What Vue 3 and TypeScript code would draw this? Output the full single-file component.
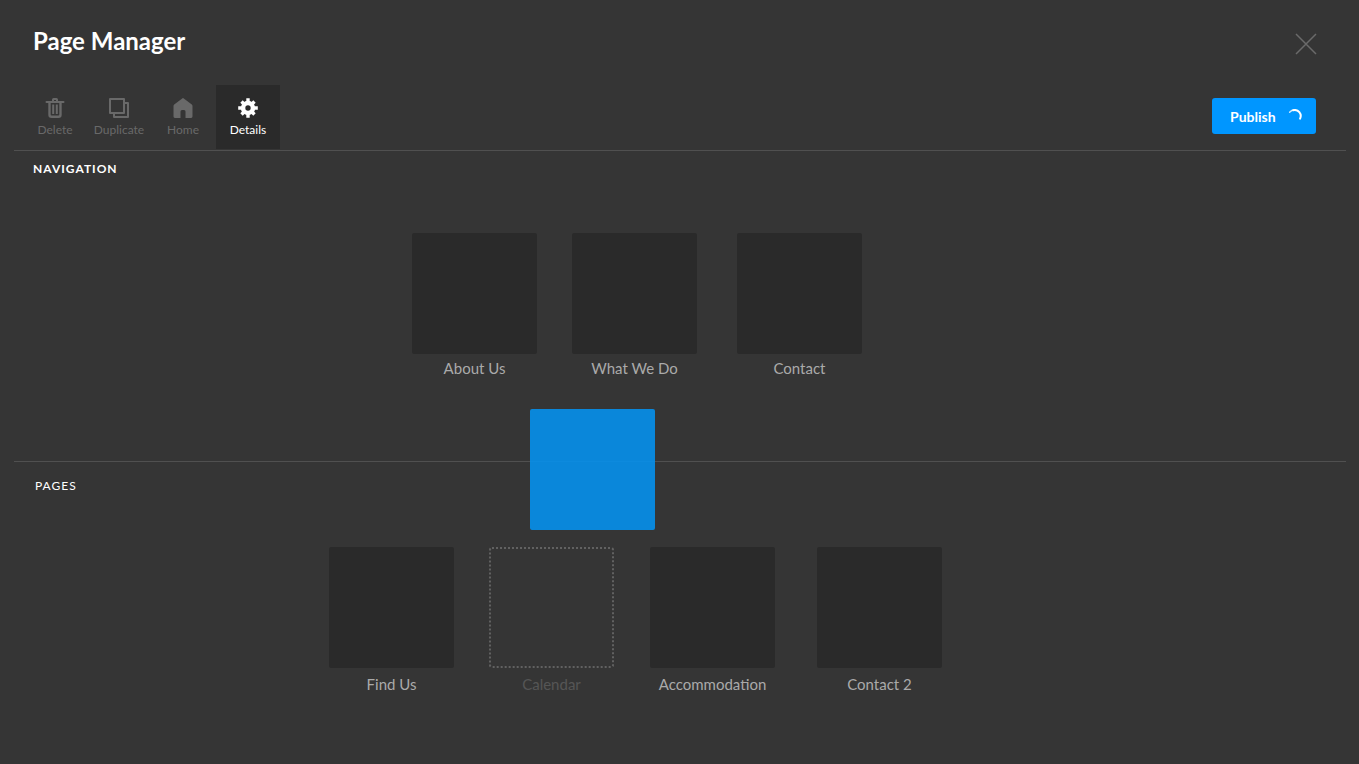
<script setup lang="ts">
interface PageItem {
  id: string
  label: string
  dragging?: boolean
}

const navigationPages: PageItem[] = [
  { id: 'about', label: 'About Us' },
  { id: 'what', label: 'What We Do' },
  { id: 'contact', label: 'Contact' },
]

const otherPages: PageItem[] = [
  { id: 'find', label: 'Find Us' },
  { id: 'calendar', label: 'Calendar', dragging: true },
  { id: 'accommodation', label: 'Accommodation' },
  { id: 'contact2', label: 'Contact 2' },
]
</script>

<template>
  <main class="manager">
    <header class="header">
      <h1 class="title">Page Manager</h1>
      <button class="close" type="button" aria-label="Close">
        <svg width="20" height="20" viewBox="0 0 20 20" fill="none" stroke="currentColor" stroke-width="1.5">
          <path d="M0 0L20 20M20 0L0 20" />
        </svg>
      </button>
    </header>

    <div class="toolbar">
      <div class="tools">
        <button class="tool" type="button" disabled>
          <svg width="20" height="20" viewBox="0 0 20 20" fill="none" stroke="currentColor" stroke-width="2">
            <path d="M1.5 4H18.5" stroke-linecap="round" />
            <path d="M8 3.5V1.6Q8 1 8.6 1H11.4Q12 1 12 1.6V3.5" />
            <path d="M4.5 4V16.8Q4.5 18.8 6.5 18.8H13.5Q15.5 18.8 15.5 16.8V4" stroke-width="2.4" />
            <path d="M8.2 6.5V16M11.8 6.5V16" />
          </svg>
          Delete
        </button>
        <button class="tool" type="button" disabled>
          <svg width="20" height="20" viewBox="0 0 20 20" fill="none" stroke="currentColor" stroke-width="2">
            <path d="M1 1H15V15H1Z" stroke-linejoin="round" />
            <path d="M16 5H19V19H5V16" stroke-linejoin="round" />
          </svg>
          Duplicate
        </button>
        <button class="tool" type="button" disabled>
          <svg width="20" height="20" viewBox="0 0 20 20" fill="currentColor">
            <path d="M9.2 .4Q10 -.2 10.8 .4L18.8 6.6Q19.5 7.2 19.5 8V18.6Q19.5 20 18.1 20H12.5V13.6Q12.5 12 11 12H9Q7.5 12 7.5 13.6V20H1.9Q.5 20 .5 18.6V8Q.5 7.2 1.2 6.6Z" />
          </svg>
          Home
        </button>
        <button class="tool active" type="button" aria-pressed="true">
          <svg width="20" height="20" viewBox="0 0 20 20">
            <g stroke="currentColor" stroke-width="3.4">
              <path d="M10 .2V19.8M.2 10H19.8" />
              <path d="M3.5 3.5L16.5 16.5M16.5 3.5L3.5 16.5" />
            </g>
            <circle cx="10" cy="10" r="7.2" fill="currentColor" />
            <circle cx="10" cy="10" r="2.7" fill="#2a2a2a" />
          </svg>
          Details
        </button>
      </div>
      <button class="publish" type="button">
        Publish
        <svg width="14" height="14" viewBox="0 0 14 14" fill="none" stroke="currentColor">
          <path d="M1.6 3.2A6.4 6.4 0 0 1 6.7 1" stroke-width="1.4" stroke-linecap="round" opacity=".8" />
          <path d="M5.2 1.2A6 6 0 0 1 12.1 9.6" stroke-width="2" stroke-linecap="round" />
        </svg>
      </button>
    </div>

    <section class="section navigation" aria-labelledby="navigation-heading">
      <h2 id="navigation-heading" class="heading strong">NAVIGATION</h2>
      <ul class="cards">
        <li v-for="page in navigationPages" :key="page.id" class="card">
          <div class="thumb"></div>
          <span class="label">{{ page.label }}</span>
        </li>
      </ul>
      <div class="drag"></div>
    </section>

    <section class="section pages" aria-labelledby="pages-heading">
      <h2 id="pages-heading" class="heading">PAGES</h2>
      <ul class="cards">
        <li v-for="page in otherPages" :key="page.id" class="card" :class="{ dragging: page.dragging }">
          <div class="thumb"></div>
          <span class="label">{{ page.label }}</span>
        </li>
      </ul>
    </section>
  </main>
</template>

<style>
html,
body {
  background: #353535;
}
</style>

<style scoped>
.manager {
  min-height: 100vh;
  box-sizing: border-box;
  padding: 24px 13px 0 14px;
  background: #353535;
  color: #fff;
  font-family: Lato, 'Liberation Sans', sans-serif;
}

button {
  margin: 0;
  padding: 0;
  border: 0;
  background: none;
  color: inherit;
  font-family: inherit;
}

.header {
  display: flex;
  align-items: flex-start;
  justify-content: space-between;
  height: 36px;
  padding: 0 30px 0 19px;
}

.title {
  margin: 0;
  font-size: 24px;
  line-height: 34px;
  font-weight: 700;
}

.close {
  display: flex;
  padding-top: 10px;
  color: #6a6a6a;
}

.close svg {
  overflow: visible;
}

.toolbar {
  display: flex;
  align-items: flex-start;
  justify-content: space-between;
  padding: 25px 30px 1px 9px;
}

.tools {
  display: flex;
}

.tool {
  display: flex;
  flex-direction: column;
  align-items: center;
  gap: 4px;
  width: 64px;
  height: 64px;
  padding-top: 13px;
  color: #696969;
  font-size: 12px;
  line-height: 16px;
}

.tool.active {
  margin-left: 1px;
  background: #2a2a2a;
  color: #fff;
}

.publish {
  display: flex;
  align-items: center;
  justify-content: space-between;
  width: 104px;
  height: 36px;
  margin-top: 13px;
  padding: 0 14px 0 18px;
  border-radius: 3px;
  background: #0096ff;
  font-size: 14px;
  font-weight: 700;
}

.section {
  position: relative;
  border-top: 1px solid #505050;
}

.navigation {
  z-index: 1;
  min-height: 310px;
}

.heading {
  margin: 0;
  padding-left: 21px;
  font-size: 12px;
  line-height: 16px;
  font-weight: 400;
  letter-spacing: 1px;
}

.heading.strong {
  padding-left: 19px;
  font-weight: 700;
}

.navigation .heading {
  padding-top: 10px;
}

.pages .heading {
  padding-top: 16px;
}

.cards {
  display: grid;
  justify-content: center;
  margin: 0;
  padding: 0;
  list-style: none;
}

.navigation .cards {
  grid-template-columns: 160px 165px 125px;
  padding: 56px 86px 0 0;
}

.pages .cards {
  grid-template-columns: 160px 161px 167px 125px;
  padding: 53px 89px 0 0;
}

.card {
  display: flex;
  flex-direction: column;
  align-items: center;
  gap: 4px;
  width: 125px;
}

.pages .card {
  gap: 6px;
}

.thumb {
  box-sizing: border-box;
  width: 100%;
  height: 121px;
  border-radius: 2px;
  background: #2a2a2a;
}

.label {
  color: #aaa;
  font-size: 15px;
  line-height: 20px;
}

.dragging .thumb {
  border: 2px dotted #616161;
  border-radius: 3px;
  background: none;
}

.dragging .label {
  color: #555;
}

.drag {
  position: absolute;
  top: 258px;
  left: calc(50% - 150px);
  width: 125px;
  height: 121px;
  border-radius: 2px;
  background: rgba(5, 144, 236, 0.9);
}
</style>
